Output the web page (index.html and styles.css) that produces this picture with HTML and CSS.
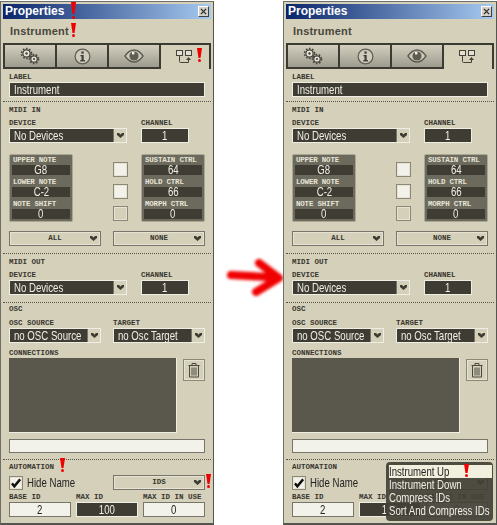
FILE: index.html
```html
<!DOCTYPE html>
<html lang="en">

<head>
    <meta charset="UTF-8">
    <title>Properties</title>
    <link rel="stylesheet" href="styles.css">
</head>

<body>
    <svg class="defs" width="0" height="0">
        <symbol id="gears" viewBox="0 0 20 18">
            <circle cx="6.5" cy="6.5" r="3.6" fill="#e8e6da" stroke="#44423a" stroke-width="1.2"/>
            <circle cx="6.5" cy="6.5" r="5" fill="none" stroke="#44423a" stroke-width="1.6" stroke-dasharray="1.6 1.6"/>
            <circle cx="6.5" cy="6.5" r="1.2" fill="#44423a"/>
            <circle cx="14" cy="12" r="3.2" fill="#e8e6da" stroke="#44423a" stroke-width="1.2"/>
            <circle cx="14" cy="12" r="4.5" fill="none" stroke="#44423a" stroke-width="1.6" stroke-dasharray="1.6 1.6"/>
            <circle cx="14" cy="12" r="1.1" fill="#44423a"/>
        </symbol>
        <symbol id="info" viewBox="0 0 18 18">
            <circle cx="9" cy="9" r="7.8" fill="#cfccbd" stroke="#5f5d52" stroke-width="1.3"/>
            <rect x="7.8" y="3.6" width="2.5" height="2.4" fill="#44423a"/>
            <path d="M6.8 7.3h3.5v5.5h1.3v1.4H6.6v-1.4h1.3V8.7H6.8z" fill="#44423a"/>
        </symbol>
        <symbol id="eye" viewBox="0 0 20 14">
            <path d="M1 7C4 2.6 7 1 10 1s6 1.600 9 6c-3 4.400-6 6-9 6s-6-1.600-9-6z" fill="#cfccbd" stroke="#5f5d52" stroke-width="1.4"/>
            <circle cx="10" cy="7" r="4.600" fill="#5f5d52"/>
            <rect x="8" y="3" width="2.400" height="2.400" fill="#f4f3ec"/>
        </symbol>
        <symbol id="conn" viewBox="0 0 18 15">
            <rect x="0.500" y="0.500" width="6" height="5" fill="#e4e1d2" stroke="#44423a"/>
            <rect x="9.500" y="0.500" width="6" height="5" fill="#e4e1d2" stroke="#44423a"/>
            <path d="M3.500 6v5.500q0 1 1 1h8V9" fill="none" stroke="#44423a"/>
            <path d="M10 10h5l-2.500-3z" fill="#44423a"/>
        </symbol>
        <symbol id="trash" viewBox="0 0 12 15">
            <path d="M0.500 2.500h11M4 2.500v-2h4v2M1.500 2.500h9v11.500h-9zM4 4.500v8M6 4.500v8M8 4.500v8" fill="none" stroke="#4a483e"/>
        </symbol>
        <symbol id="chev" viewBox="0 0 7 5">
            <path d="M0 0h2l1.500 1.500L5 0h2v2L3.500 5 0 2z" fill="#3f3c34"/>
        </symbol>
        <symbol id="check" viewBox="0 0 12 11">
            <path d="M1 6l3 3.500L11 1" fill="none" stroke="#111" stroke-width="3"/>
        </symbol>
    </svg>

    <!-- left window, before -->
    <div class="window">
        <div class="title"><span>Properties</span><div class="close"><svg viewBox="0 0 8 8"><path d="M1 1l6 6M7 1l-6 6" stroke="#222" stroke-width="1.300"/></svg></div></div>
        <div class="name">Instrument</div>
        <div class="tabs">
            <div class="tab"><svg class="i-gears"><use href="#gears"/></svg></div>
            <div class="tab"><svg class="i-info"><use href="#info"/></svg></div>
            <div class="tab"><svg class="i-eye"><use href="#eye"/></svg></div>
            <div class="tab active"><svg class="i-conn"><use href="#conn"/></svg></div>
        </div>

        <div class="sec sec-label">
            <div class="lbl">Label</div>
            <div class="field text"><span>Instrument</span></div>
        </div>

        <div class="sec sec-in">
            <div class="lbl sec-title">MIDI In</div>
            <div class="row-dev">
                <div>
                    <div class="lbl">Device</div>
                    <div class="select"><span>No Devices</span><b><svg><use href="#chev"/></svg></b></div>
                </div>
                <div>
                    <div class="lbl">Channel</div>
                    <div class="field num"><span>1</span></div>
                </div>
            </div>
            <div class="row-notes">
                <div class="block">
                    <div class="lbl">Upper Note</div>
                    <div class="val"><span>G8</span></div>
                    <div class="lbl">Lower Note</div>
                    <div class="val"><span>C-2</span></div>
                    <div class="lbl">Note Shift</div>
                    <div class="val"><span>0</span></div>
                </div>
                <div class="checks">
                    <div class="box on"></div>
                    <div class="box on"></div>
                    <div class="box"></div>
                </div>
                <div class="block">
                    <div class="lbl">Sustain Ctrl</div>
                    <div class="val"><span>64</span></div>
                    <div class="lbl">Hold Ctrl</div>
                    <div class="val"><span>66</span></div>
                    <div class="lbl">Morph Ctrl</div>
                    <div class="val"><span>0</span></div>
                </div>
            </div>
            <div class="row-two">
                <div class="drop lbl"><span>All</span><svg><use href="#chev"/></svg></div>
                <div class="drop lbl"><span>None</span><svg><use href="#chev"/></svg></div>
            </div>
        </div>

        <div class="sec sec-out">
            <div class="lbl sec-title">MIDI Out</div>
            <div class="row-dev">
                <div>
                    <div class="lbl">Device</div>
                    <div class="select"><span>No Devices</span><b><svg><use href="#chev"/></svg></b></div>
                </div>
                <div>
                    <div class="lbl">Channel</div>
                    <div class="field num"><span>1</span></div>
                </div>
            </div>
        </div>

        <div class="sec sec-osc">
            <div class="lbl sec-title">OSC</div>
            <div class="row-two">
                <div>
                    <div class="lbl">OSC Source</div>
                    <div class="select"><span>no OSC Source</span><b><svg><use href="#chev"/></svg></b></div>
                </div>
                <div>
                    <div class="lbl">Target</div>
                    <div class="select"><span>no Osc Target</span><b><svg><use href="#chev"/></svg></b></div>
                </div>
            </div>
            <div class="lbl conn-lbl">Connections</div>
            <div class="row-conn">
                <div class="conn-box"></div>
                <div class="trash"><svg><use href="#trash"/></svg></div>
            </div>
            <div class="field blank"></div>
        </div>

        <div class="sec sec-auto">
            <div class="lbl sec-title">Automation</div>
            <div class="row-two">
                <div class="hide"><div class="box on tick"><svg><use href="#check"/></svg></div><span>Hide Name</span></div>
                <div class="drop lbl"><span>IDs</span><svg><use href="#chev"/></svg></div>
            </div>
            <div class="row-ids">
                <div>
                    <div class="lbl">Base ID</div>
                    <div class="field num light"><span>2</span></div>
                </div>
                <div>
                    <div class="lbl">Max ID</div>
                    <div class="field num"><span>100</span></div>
                </div>
                <div>
                    <div class="lbl">Max ID in use</div>
                    <div class="field num light"><span>0</span></div>
                </div>
            </div>
        </div>

        <i class="excl ex-title"></i>
        <i class="excl ex-name"></i>
        <i class="excl ex-tab"></i>
        <i class="excl ex-auto"></i>
        <i class="excl ex-ids"></i>
    </div>

    <!-- arrow between the windows -->
    <svg class="arrow" viewBox="0 0 70 50"><defs><filter id="soft" x="-20%" y="-20%" width="140%" height="140%"><feGaussianBlur stdDeviation="1.500"/></filter></defs><path d="M10 21l46 2.500M38 9l20 15L35 38" fill="none" stroke="#f00000" stroke-width="8" stroke-linecap="round" stroke-linejoin="round" filter="url(#soft)"/></svg>

    <!-- right window, after -->
    <div class="window">
        <div class="title"><span>Properties</span><div class="close"><svg viewBox="0 0 8 8"><path d="M1 1l6 6M7 1l-6 6" stroke="#222" stroke-width="1.300"/></svg></div></div>
        <div class="name">Instrument</div>
        <div class="tabs">
            <div class="tab"><svg class="i-gears"><use href="#gears"/></svg></div>
            <div class="tab"><svg class="i-info"><use href="#info"/></svg></div>
            <div class="tab"><svg class="i-eye"><use href="#eye"/></svg></div>
            <div class="tab active"><svg class="i-conn"><use href="#conn"/></svg></div>
        </div>

        <div class="sec sec-label">
            <div class="lbl">Label</div>
            <div class="field text"><span>Instrument</span></div>
        </div>

        <div class="sec sec-in">
            <div class="lbl sec-title">MIDI In</div>
            <div class="row-dev">
                <div>
                    <div class="lbl">Device</div>
                    <div class="select"><span>No Devices</span><b><svg><use href="#chev"/></svg></b></div>
                </div>
                <div>
                    <div class="lbl">Channel</div>
                    <div class="field num"><span>1</span></div>
                </div>
            </div>
            <div class="row-notes">
                <div class="block">
                    <div class="lbl">Upper Note</div>
                    <div class="val"><span>G8</span></div>
                    <div class="lbl">Lower Note</div>
                    <div class="val"><span>C-2</span></div>
                    <div class="lbl">Note Shift</div>
                    <div class="val"><span>0</span></div>
                </div>
                <div class="checks">
                    <div class="box on"></div>
                    <div class="box on"></div>
                    <div class="box"></div>
                </div>
                <div class="block">
                    <div class="lbl">Sustain Ctrl</div>
                    <div class="val"><span>64</span></div>
                    <div class="lbl">Hold Ctrl</div>
                    <div class="val"><span>66</span></div>
                    <div class="lbl">Morph Ctrl</div>
                    <div class="val"><span>0</span></div>
                </div>
            </div>
            <div class="row-two">
                <div class="drop lbl"><span>All</span><svg><use href="#chev"/></svg></div>
                <div class="drop lbl"><span>None</span><svg><use href="#chev"/></svg></div>
            </div>
        </div>

        <div class="sec sec-out">
            <div class="lbl sec-title">MIDI Out</div>
            <div class="row-dev">
                <div>
                    <div class="lbl">Device</div>
                    <div class="select"><span>No Devices</span><b><svg><use href="#chev"/></svg></b></div>
                </div>
                <div>
                    <div class="lbl">Channel</div>
                    <div class="field num"><span>1</span></div>
                </div>
            </div>
        </div>

        <div class="sec sec-osc">
            <div class="lbl sec-title">OSC</div>
            <div class="row-two">
                <div>
                    <div class="lbl">OSC Source</div>
                    <div class="select"><span>no OSC Source</span><b><svg><use href="#chev"/></svg></b></div>
                </div>
                <div>
                    <div class="lbl">Target</div>
                    <div class="select"><span>no Osc Target</span><b><svg><use href="#chev"/></svg></b></div>
                </div>
            </div>
            <div class="lbl conn-lbl">Connections</div>
            <div class="row-conn">
                <div class="conn-box"></div>
                <div class="trash"><svg><use href="#trash"/></svg></div>
            </div>
            <div class="field blank"></div>
        </div>

        <div class="sec sec-auto">
            <div class="lbl sec-title">Automation</div>
            <div class="row-two">
                <div class="hide"><div class="box on tick"><svg><use href="#check"/></svg></div><span>Hide Name</span></div>
                <div class="drop lbl"><span>IDs</span><svg><use href="#chev"/></svg></div>
            </div>
            <div class="row-ids">
                <div>
                    <div class="lbl">Base ID</div>
                    <div class="field num light"><span>2</span></div>
                </div>
                <div>
                    <div class="lbl">Max ID</div>
                    <div class="field num"><span>100</span></div>
                </div>
                <div>
                    <div class="lbl">Max ID in use</div>
                    <div class="field num light"><span>0</span></div>
                </div>
            </div>
        </div>

        <div class="menu">
            <div class="item sel"><span>Instrument Up</span></div>
            <div class="item"><span>Instrument Down</span></div>
            <div class="item"><span>Compress IDs</span></div>
            <div class="item"><span>Sort And Compress IDs</span></div>
        </div>
        <i class="excl ex-menu"></i>
    </div>
</body>

</html>
```

FILE: styles.css
```css
* {
    margin: 0;
    padding: 0;
    box-sizing: border-box;
}

body {
    display: flex;
    justify-content: space-between;
    width: 497px;
    height: 525px;
    overflow: hidden;
    background-color: #fff;
    font: 13px/15px "Liberation Sans", sans-serif;
    color: #f0efe6;
}

.defs {
    position: absolute;
}

svg {
    display: block;
}

.window {
    position: relative;
    width: 214px;
    height: 524px;
    margin-top: 1px;
    padding: 2px 2px 0;
    background-color: #d5d0b9;
    border: 1px solid #6e6e68;
    border-right-color: #55554f;
    border-bottom: 2px solid #55554f;
}

.title {
    display: flex;
    align-items: center;
    justify-content: space-between;
    height: 15px;
    padding: 0 2px;
    background-image: linear-gradient(to right, #0a246a, #a6caf0);
    font: bold 12px/15px "Liberation Sans", sans-serif;
    color: #fff;
}

.close {
    width: 11px;
    height: 11px;
    padding: 1px;
    background-color: #d4d0c8;
    border: 1px solid;
    border-color: #fff #404040 #404040 #fff;
}

.name {
    height: 24px;
    padding-left: 7px;
    font: bold 11px/24px "Liberation Sans", sans-serif;
    letter-spacing: 0.200px;
    color: #4a473d;
}

.tabs {
    display: flex;
    height: 26px;
    border-top: 2px solid #3b3a33;
}

.tab {
    display: flex;
    flex: 1;
    align-items: center;
    justify-content: center;
    border-left: 2px solid #3b3a33;
    border-bottom: 2px solid #3b3a33;
    background-image: linear-gradient(#d3cfbf, #9d9b8d);
}

.tab.active {
    flex: 0 0 52px;
    background: #d5d0b9;
    border-bottom: 0;
    border-right: 2px solid #3b3a33;
}

.i-gears { width: 20px; height: 18px; }
.i-info { width: 17px; height: 17px; }
.i-eye { width: 20px; height: 14px; }
.i-conn { width: 18px; height: 15px; }

.sec {
    padding: 0 6px;
    border-bottom: 1px dotted #55534a;
}

.sec-label { height: 33px; padding-top: 4px; }
.sec-in { height: 152px; padding-top: 4px; }
.sec-out { height: 49px; padding-top: 4px; }
.sec-osc { height: 157px; padding-top: 2px; }
.sec-auto { padding-top: 3px; border-bottom: 0; }

.lbl {
    height: 8px;
    margin-bottom: 1px;
    font: bold 7.500px/8px "Liberation Mono", monospace;
    text-transform: uppercase;
    white-space: nowrap;
    color: #38362f;
}

.sec-title {
    margin-bottom: 5px;
}

.sec-osc .sec-title {
    margin-bottom: 6px;
}

.conn-lbl {
    margin-top: 6px;
}

.sec-auto .sec-title {
    margin-bottom: 4px;
}

.field,
.select {
    height: 15px;
    background-color: #3f3c34;
    border: 1px solid #efeee4;
}

/* the original font is a tall condensed one, so squeeze the text */
.text span,
.select span,
.num span,
.val span,
.hide span,
.item span {
    display: inline-block;
    white-space: nowrap;
    transform: scaleX(0.74);
    transform-origin: 0 50%;
}

.num span,
.val span {
    transform-origin: 50% 50%;
}

.text {
    padding-left: 4px;
    line-height: 13px;
}

.num {
    text-align: center;
    line-height: 13px;
}

.light,
.blank {
    background-color: #f2f1ea;
    color: #222;
    border-color: #77756a;
}

.blank {
    height: 14px;
    margin-top: 6px;
}

.select {
    display: flex;
    justify-content: space-between;
    line-height: 13px;
    overflow: hidden;
}

.select span {
    flex: none;
    width: 70px;
    margin-left: 4px;
}

.select b {
    display: flex;
    flex: none;
    align-items: center;
    justify-content: center;
    width: 13px;
    background-color: #d5d0b9;
    border-left: 1px solid #77756a;
}

.select svg,
.drop svg {
    width: 7px;
    height: 5px;
}

.row-dev {
    display: grid;
    grid-template-columns: 118px 48px;
    column-gap: 14px;
}

.row-notes {
    display: grid;
    grid-template-columns: 104px 28px 64px;
    margin: 11px 0 9px;
}

.row-two {
    display: grid;
    grid-template-columns: 92px 92px;
    column-gap: 12px;
}

.block {
    width: 64px;
    height: 68px;
    padding: 1px 2px 2px;
    background-color: #6c6a5d;
    border: 1px solid #a9a693;
    border-radius: 2px;
}

.block .lbl {
    padding-left: 1px;
    letter-spacing: -0.200px;
    color: #e6e4d6;
}

.val {
    height: 10px;
    margin-bottom: 3px;
    background-color: #3f3c34;
    text-align: center;
    line-height: 10px;
}

.checks {
    display: flex;
    flex-direction: column;
    gap: 7px;
    padding-top: 8px;
}

.box {
    width: 15px;
    height: 15px;
    background-color: #d5d0b9;
    border: 1px solid #8b8976;
    box-shadow: inset 0 0 0 1px #e6e3d4;
}

.box.on {
    background-color: #f2f1ea;
}

.drop {
    display: flex;
    align-items: center;
    justify-content: center;
    position: relative;
    height: 15px;
    margin: 0;
    background-color: #d5d0b9;
    border: 1px solid #77756a;
    box-shadow: inset 0 0 0 1px #e6e3d4;
    line-height: 13px;
}

.drop svg {
    position: absolute;
    right: 3px;
    top: 4px;
}

.conn-box {
    width: 168px;
    height: 75px;
    background-color: #5a574c;
    border: 1px solid #efeee4;
    border-top: 0;
    border-left: 0;
}

.row-conn {
    display: flex;
    justify-content: space-between;
    align-items: flex-start;
}

.trash {
    display: flex;
    align-items: center;
    justify-content: center;
    width: 22px;
    height: 22px;
    margin-top: 1px;
    border: 1px solid #8b8976;
    box-shadow: inset 0 0 0 1px #e6e3d4;
}

.trash svg {
    width: 12px;
    height: 15px;
}

.hide {
    display: flex;
    align-items: center;
    gap: 4px;
    color: #222;
}

.tick {
    flex: none;
    width: 14px;
    height: 14px;
    padding: 1px;
}

.tick svg {
    width: 10px;
    height: 10px;
}

.row-ids {
    display: grid;
    grid-template-columns: 62px 62px 62px;
    column-gap: 5px;
    margin-top: 3px;
}

.menu {
    position: absolute;
    left: 102px;
    top: 460px;
    width: 107px;
    height: 59px;
    padding: 3px 1px 2px 3px;
    background-color: rgba(66, 64, 54, 0.92);
    border-radius: 4px;
    line-height: 13px;
}

.item {
    height: 13px;
    overflow: hidden;
    white-space: nowrap;
}

.item.sel {
    background-color: #f1efdd;
    color: #222;
}

/* red marks painted over the screenshot */
.excl {
    position: absolute;
    width: 5px;
    height: 14px;
}

.excl::before {
    content: "";
    position: absolute;
    left: 0;
    top: 0;
    width: 5px;
    height: 72%;
    background-color: #f00000;
    clip-path: polygon(0 0, 100% 0, 70% 100%, 30% 100%);
}

.excl::after {
    content: "";
    position: absolute;
    left: 0.500px;
    bottom: 0;
    width: 3.500px;
    height: 3.500px;
    border-radius: 50%;
    background-color: #f00000;
}

.ex-title { left: 70px; top: 0; height: 17px; }
.ex-name { left: 70px; top: 21px; }
.ex-tab { left: 196px; top: 46px; }
.ex-auto { left: 59px; top: 456px; }
.ex-ids { left: 205px; top: 472px; }
.ex-menu { left: 180px; top: 462px; height: 13px; }

.arrow {
    position: absolute;
    left: 221px;
    top: 254px;
    width: 70px;
    height: 50px;
    pointer-events: none;
}
```
